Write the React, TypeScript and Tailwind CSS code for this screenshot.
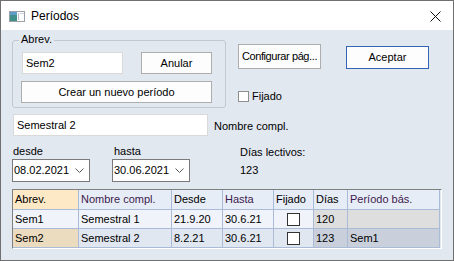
const font = "font-['Liberation_Sans',Arial,sans-serif]";

const columns = [
  { label: 'Abrev.', w: 'w-[66px]', head: 'bg-[#fde9c6] text-black' },
  { label: 'Nombre compl.', w: 'w-[93px]', head: 'bg-[#e7edf6] text-[#3d1a4d]' },
  { label: 'Desde', w: 'w-[51px]', head: 'bg-[#e7edf6] text-black' },
  { label: 'Hasta', w: 'w-[51px]', head: 'bg-[#e7edf6] text-[#3d1a4d]' },
  { label: 'Fijado', w: 'w-[40px]', head: 'bg-[#e7edf6] text-black' },
  { label: 'Días', w: 'w-[34px]', head: 'bg-[#e7edf6] text-black' },
  { label: 'Período bás.', w: 'w-[92px]', head: 'bg-[#e7edf6] text-[#3d1a4d]' },
];

const rows = [
  {
    cells: ['Sem1', 'Semestral 1', '21.9.20', '30.6.21', '', '120', ''],
    bg: ['bg-[#f0f4fa]', 'bg-[#f0f4fa]', 'bg-[#f0f4fa]', 'bg-[#f0f4fa]', 'bg-[#f0f4fa]', 'bg-[#dedede]', 'bg-[#dedede]'],
  },
  {
    cells: ['Sem2', 'Semestral 2', '8.2.21', '30.6.21', '', '123', 'Sem1'],
    bg: ['bg-[#ecdcbf]', 'bg-[#e0e7f0]', 'bg-[#e0e7f0]', 'bg-[#e0e7f0]', 'bg-[#e0e7f0]', 'bg-[#c9d0dc]', 'bg-[#c9d0dc]'],
  },
];

function Chevron() {
  return (
    <svg width="9" height="5" viewBox="0 0 9 5" className="shrink-0">
      <polyline points="0.5,0.5 4.5,4.5 8.5,0.5" fill="none" stroke="#5a5a5a" strokeWidth="1" />
    </svg>
  );
}

function DatePicker({ value }: { value: string }) {
  return (
    <div className="h-[23px] flex items-center justify-between border border-[#7a7a7a] bg-white pl-[1px] pr-[5px]">
      <span>{value}</span>
      <Chevron />
    </div>
  );
}

function Button({ children, className = '' }: { children: React.ReactNode; className?: string }) {
  return (
    <button className={`flex items-center justify-center whitespace-nowrap border border-[#adadad] bg-[#fdfdfd] text-black ${className}`}>
      {children}
    </button>
  );
}

export default function App() {
  return (
    <div className={`${font} text-[11px] text-black w-[454px] h-[261px] border border-[#707070] bg-[#e2e8f0] flex flex-col`}>
      {/* title bar */}
      <div className="h-[29px] bg-white flex items-center shrink-0">
        <svg width="16" height="11" viewBox="0 0 16 11" className="ml-[8px] mt-[1px]">
          <rect x="0.5" y="0.5" width="15" height="10" fill="#ffffff" stroke="#9aa0a6" />
          <rect x="1" y="1" width="7" height="9" fill="#3f8f8a" />
          <rect x="1" y="1" width="7" height="3" fill="#5c9ec9" />
          <rect x="9" y="2" width="1" height="7" fill="#b9c2cc" />
          <rect x="11" y="2" width="4" height="1" fill="#c9d0d8" />
        </svg>
        <span className="ml-[6px] text-[12px] mt-[1px]">Períodos</span>
        <svg width="11" height="11" viewBox="0 0 11 11" className="ml-auto mr-[12px] mt-[2px]">
          <path d="M0.5 0.5 L10.5 10.5 M10.5 0.5 L0.5 10.5" stroke="#111" strokeWidth="1" />
        </svg>
      </div>

      <div className="pl-[11px] flex flex-col">
        {/* top row */}
        <div className="flex mt-[10px]">
          <div className="relative w-[214px] h-[68px] border border-[#c3c8cf] rounded-[3px] shrink-0">
            <span className="absolute -top-[8px] left-[6px] px-[2px] bg-[#e2e8f0] leading-[13px]">Abrev.</span>
            <div className="flex mt-[11px] ml-[9px]">
              <div className="w-[101px] h-[22px] border border-[#d9d9d9] bg-white flex items-center pl-[3px]">Sem2</div>
              <Button className="ml-[18px] w-[71px] h-[22px]">Anular</Button>
            </div>
            <Button className="mt-[7px] ml-[8px] w-[191px] h-[22px]">Crear un nuevo período</Button>
          </div>
          <div className="ml-[12px] flex flex-col">
            <div className="flex items-start">
              <Button className="mt-[4px] w-[83px] h-[25px] px-0 tracking-[-0.4px]">Configurar pág...</Button>
              <button className="ml-[25px] mt-[6px] w-[83px] h-[23px] border border-[#3465b4] bg-[#fdfdfd] flex items-center justify-center">
                Aceptar
              </button>
            </div>
            <div className="flex items-center mt-[22px] leading-[11px]">
              <div className="w-[11px] h-[11px] border border-[#8f8f8f] bg-white" />
              <span className="ml-[3px]">Fijado</span>
            </div>
          </div>
        </div>

        {/* full name */}
        <div className="flex items-center mt-[6px]">
          <div className="ml-[1px] w-[195px] h-[22px] border border-[#d9d9d9] bg-white flex items-center pl-[3px]">Semestral 2</div>
          <span className="ml-[6px] mt-[3px]">Nombre compl.</span>
        </div>

        {/* dates */}
        <div className="flex mt-[9px]">
          <div className="w-[78px] flex flex-col">
            <span className="leading-[13px] pl-[1px]">desde</span>
            <div className="mt-[1px]"><DatePicker value="08.02.2021" /></div>
          </div>
          <div className="ml-[22px] w-[78px] flex flex-col">
            <span className="leading-[13px] pl-[2px]">hasta</span>
            <div className="mt-[1px]"><DatePicker value="30.06.2021" /></div>
          </div>
          <div className="ml-[50px] flex flex-col">
            <span className="leading-[13px] mt-[1px]">Días lectivos:</span>
            <span className="leading-[13px] mt-[5px]">123</span>
          </div>
        </div>

        {/* grid */}
        <div className="mt-[7px] w-[430px] border-t border-l border-[#7f7f7f] border-r border-b border-r-white border-b-white">
          <div className="flex h-[20px]">
            {columns.map((c) => (
              <div key={c.label} className={`${c.w} ${c.head} shrink-0 border-r border-b border-[#a9bbd6] flex items-center pl-[2px] whitespace-nowrap overflow-hidden`}>
                {c.label}
              </div>
            ))}
          </div>
          {rows.map((r) => (
            <div key={r.cells[0]} className="flex h-[19px]">
              {columns.map((c, i) => (
                <div key={c.label} className={`${c.w} ${r.bg[i]} shrink-0 border-r border-b border-[#a9bbd6] flex items-center ${i === 4 ? 'justify-center' : 'pl-[2px]'} whitespace-nowrap overflow-hidden`}>
                  {i === 4 ? <div className="w-[13px] h-[13px] border border-[#333] bg-white" /> : r.cells[i]}
                </div>
              ))}
            </div>
          ))}
        </div>
      </div>
    </div>
  );
}
